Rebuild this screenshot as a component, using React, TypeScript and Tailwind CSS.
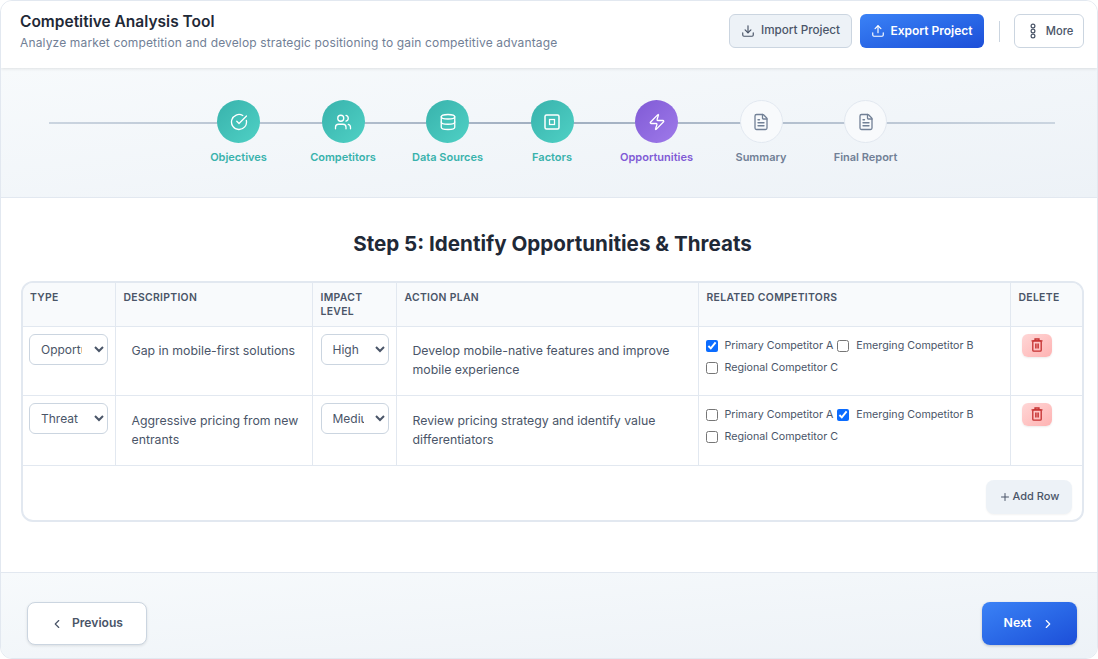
import { ChevronLeft, ChevronRight, CircleCheckBig, Database, Download, FileText, Plus, Upload, Users, Zap } from 'lucide-react';

const steps = [
  { label: 'Objectives', state: 'done', icon: <CircleCheckBig className="h-[18px] w-[18px]" strokeWidth={1.75} /> },
  { label: 'Competitors', state: 'done', icon: <Users className="h-[18px] w-[18px]" strokeWidth={1.75} /> },
  { label: 'Data Sources', state: 'done', icon: <Database className="h-[18px] w-[18px]" strokeWidth={1.75} /> },
  { label: 'Factors', state: 'done', icon: <FactorIcon /> },
  { label: 'Opportunities', state: 'active', icon: <Zap className="h-[18px] w-[18px]" strokeWidth={1.75} /> },
  { label: 'Summary', state: 'todo', icon: <FileText className="h-[18px] w-[18px]" strokeWidth={1.75} /> },
  { label: 'Final Report', state: 'todo', icon: <FileText className="h-[18px] w-[18px]" strokeWidth={1.75} /> },
];

const competitors = ['Primary Competitor A', 'Emerging Competitor B', 'Regional Competitor C'];

const rows = [
  {
    type: 'Opportunity',
    description: 'Gap in mobile-first solutions',
    impact: 'High',
    plan: 'Develop mobile-native features and improve mobile experience',
    checked: 0,
    height: 'h-[69px]',
    textTop: 'pt-[14px]',
  },
  {
    type: 'Threat',
    description: 'Aggressive pricing from new entrants',
    impact: 'Medium',
    plan: 'Review pricing strategy and identify value differentiators',
    checked: 1,
    height: 'h-[70px]',
    textTop: 'pt-[15px]',
  },
];

function FactorIcon() {
  return (
    <svg className="h-[18px] w-[18px]" viewBox="0 0 18 18" fill="none" stroke="currentColor" strokeWidth="1.5">
      <rect x="2" y="2" width="14" height="14" rx="1.5" />
      <rect x="6.5" y="6.5" width="5" height="5" strokeWidth="1.25" />
    </svg>
  );
}

function MoreIcon() {
  return (
    <svg className="h-4 w-4" viewBox="0 0 16 16" fill="none" stroke="currentColor" strokeWidth="1.2">
      <circle cx="8" cy="3" r="1.9" />
      <circle cx="8" cy="8" r="1.9" />
      <circle cx="8" cy="13" r="1.9" />
    </svg>
  );
}

function TrashIcon() {
  return (
    <svg className="h-4 w-4" viewBox="0 0 16 16" fill="none" stroke="currentColor" strokeWidth="1.3">
      <path d="M2.5 3.8h11" />
      <path d="M6 3.8V2h4v1.8" />
      <rect x="3.8" y="3.8" width="8.4" height="10.4" rx="1" />
      <path d="M6.9 6.5v5M9.1 6.5v5" strokeWidth="1.5" />
    </svg>
  );
}

function Step({ label, state, icon }: { label: string; state: string; icon: React.ReactNode }) {
  const circle =
    state === 'done'
      ? 'bg-gradient-to-br from-[#38b2ac] to-[#4fd1c5] text-white'
      : state === 'active'
        ? 'bg-gradient-to-br from-[#805ad5] to-[#9f7aea] text-white'
        : 'border border-[#e2e8f0] bg-[#f8fafc] text-[#718096]';
  const text = state === 'done' ? 'text-[#38b2ac]' : state === 'active' ? 'text-[#805ad5]' : 'text-[#718096]';
  return (
    <div className="flex w-[104.5px] flex-col items-center">
      <div className={`flex h-[43px] w-[43px] items-center justify-center rounded-full ${circle}`}>{icon}</div>
      <span className={`mt-[7px] whitespace-nowrap text-[11px] leading-[14px] font-semibold ${text}`}>{label}</span>
    </div>
  );
}

export default function App() {
  return (
    <div className="flex h-[659px] w-[1098px] flex-col overflow-hidden rounded-xl border border-[#e2e8f0] bg-white font-['Inter',sans-serif]">
      <header className="z-10 flex h-[67px] shrink-0 items-start justify-between bg-white pt-[9px] pr-[13px] pl-[19px] shadow-[0_1px_3px_rgba(0,0,0,0.1)]">
        <div className="mt-px">
          <h1 className="text-[15.5px] leading-[22px] font-semibold text-[#1f2937]">Competitive Analysis Tool</h1>
          <p className="mt-px text-xs leading-[18px] tracking-[0.15px] text-[#718096]">
            Analyze market competition and develop strategic positioning to gain competitive advantage
          </p>
        </div>
        <div className="mt-1 flex items-center">
          <button className="flex h-[34px] w-[123px] items-center justify-center gap-[6px] rounded-md border border-[#cbd5e0] bg-[#edf2f7] text-[11.7px] font-medium text-[#4a5568]">
            <Download className="h-[14px] w-[14px]" />
            Import Project
          </button>
          <button className="ml-2 flex h-[34px] w-[124px] items-center justify-center gap-[5px] rounded-md bg-gradient-to-br from-[#3b82f6] to-[#1d4ed8] text-xs font-semibold text-white">
            <Upload className="h-[14px] w-[14px]" />
            Export Project
          </button>
          <div className="ml-[15px] h-[21px] w-px bg-[#cbd5e0]" />
          <button className="ml-[14px] flex h-[34px] w-[70px] items-center justify-center gap-[5px] rounded-md border border-[#cbd5e0] bg-white text-[11.2px] font-medium text-[#4a5568]">
            <MoreIcon />
            More
          </button>
        </div>
      </header>

      <section className="relative flex h-[130px] shrink-0 justify-center border-b border-[#e2e8f0] bg-gradient-to-br from-[#f7fafc] to-[#edf2f7] pt-8 pl-[6px]">
        <div className="absolute top-[54px] right-[42px] left-[48px] h-0.5 bg-gradient-to-r from-[#cbd5e0] via-[#a0aec0] to-[#cbd5e0]" />
        <div className="relative flex">
          {steps.map((step) => (
            <Step key={step.label} label={step.label} state={step.state} icon={step.icon} />
          ))}
        </div>
      </section>

      <main className="min-h-0 flex-1 bg-white pt-[33px] pr-[13px] pl-5">
        <h2 className="text-center text-[20.6px] leading-[26px] font-bold text-[#1f2937]">Step 5: Identify Opportunities &amp; Threats</h2>
        <div className="mt-6 overflow-hidden rounded-xl border-2 border-[#e2e8f0] bg-white">
          <table className="w-full table-fixed border-collapse text-[12.3px] text-[#4a5568]">
            <colgroup>
              <col className="w-[92px]" />
              <col className="w-[197px]" />
              <col className="w-[84px]" />
              <col className="w-[302px]" />
              <col className="w-[312px]" />
              <col />
            </colgroup>
            <thead>
              <tr className="h-[43px] border-b border-[#e2e8f0] bg-[#f8fafc] text-left align-top text-[10.4px] leading-[14px] font-semibold tracking-[0.03em] text-[#4a5568] uppercase">
                <th className="border-r border-[#e2e8f0] px-[7px] pt-2 font-semibold">Type</th>
                <th className="border-r border-[#e2e8f0] px-2 pt-2 font-semibold">Description</th>
                <th className="border-r border-[#e2e8f0] px-2 pt-2 font-semibold">Impact Level</th>
                <th className="border-r border-[#e2e8f0] px-2 pt-2 font-semibold">Action Plan</th>
                <th className="border-r border-[#e2e8f0] px-2 pt-2 font-semibold">Related Competitors</th>
                <th className="px-2 pt-2 font-semibold">Delete</th>
              </tr>
            </thead>
            <tbody>
              {rows.map((row) => (
                <tr key={row.type} className={`${row.height} border-b border-[#e2e8f0] align-top`}>
                  <td className="border-r border-[#e2e8f0] px-[6px] pt-[7px]">
                    <select defaultValue={row.type} className="h-[31px] w-[79px] rounded-md border border-[#cbd5e0] bg-white pr-[9px] pl-[7px] text-xs text-[#4a5568]">
                      <option>Opportunity</option>
                      <option>Threat</option>
                    </select>
                  </td>
                  <td className={`border-r border-[#e2e8f0] pr-2 pl-4 leading-[19px] ${row.textTop}`}>{row.description}</td>
                  <td className="border-r border-[#e2e8f0] px-2 pt-[7px]">
                    <select defaultValue={row.impact} className="h-[31px] w-[68px] rounded-md border border-[#cbd5e0] bg-white pr-2 pl-[7px] text-xs text-[#4a5568]">
                      <option>High</option>
                      <option>Medium</option>
                      <option>Low</option>
                    </select>
                  </td>
                  <td className={`border-r border-[#e2e8f0] px-4 leading-[19px] ${row.textTop}`}>{row.plan}</td>
                  <td className="border-r border-[#e2e8f0] px-[7px] pt-2">
                    <div className="flex flex-wrap text-[10.7px] leading-[22px]">
                      {competitors.map((name, i) => (
                        <label key={name} className="mr-1 flex h-[22.5px] items-center whitespace-nowrap">
                          <input type="checkbox" defaultChecked={i === row.checked} className="mr-[7px] h-3 w-3 accent-[#0b6cff]" />
                          {name}
                        </label>
                      ))}
                    </div>
                  </td>
                  <td className="px-[11px] pt-[7px]">
                    <button className="flex h-[23px] w-[30px] items-center justify-center rounded-md bg-gradient-to-br from-[#fed7d7] to-[#feb2b2] text-[#c53030] shadow-[0_1px_2px_rgba(0,0,0,0.08)]">
                      <TrashIcon />
                    </button>
                  </td>
                </tr>
              ))}
            </tbody>
          </table>
          <div className="flex h-[54px] items-start justify-end pt-[14px] pr-[10px]">
            <button className="flex h-[34px] w-[86px] items-center justify-center gap-0.5 rounded-lg bg-[#edf2f7] text-[11px] font-medium text-[#4a5568] shadow-[0_1px_2px_rgba(0,0,0,0.05)]">
              <Plus className="h-3 w-3" />
              Add Row
            </button>
          </div>
        </div>
      </main>

      <footer className="flex h-[86px] shrink-0 items-start justify-between border-t border-[#e2e8f0] bg-gradient-to-br from-[#f7fafc] to-[#edf2f7] pt-[29px] pr-5 pl-[26px]">
        <button className="flex h-[43px] w-[120px] items-center justify-center gap-2 rounded-lg border border-[#cbd5e0] bg-white pr-px text-[12.1px] font-semibold text-[#4a5568] shadow-[0_1px_3px_rgba(0,0,0,0.1)]">
          <ChevronLeft className="h-[14px] w-[14px]" />
          Previous
        </button>
        <button className="flex h-[43px] w-[95px] items-center justify-center gap-[10px] rounded-lg bg-gradient-to-br from-[#3b82f6] to-[#1d4ed8] text-[12.3px] font-semibold text-white shadow-[0_1px_3px_rgba(0,0,0,0.2)]">
          Next
          <ChevronRight className="h-[14px] w-[14px]" />
        </button>
      </footer>
    </div>
  );
}
